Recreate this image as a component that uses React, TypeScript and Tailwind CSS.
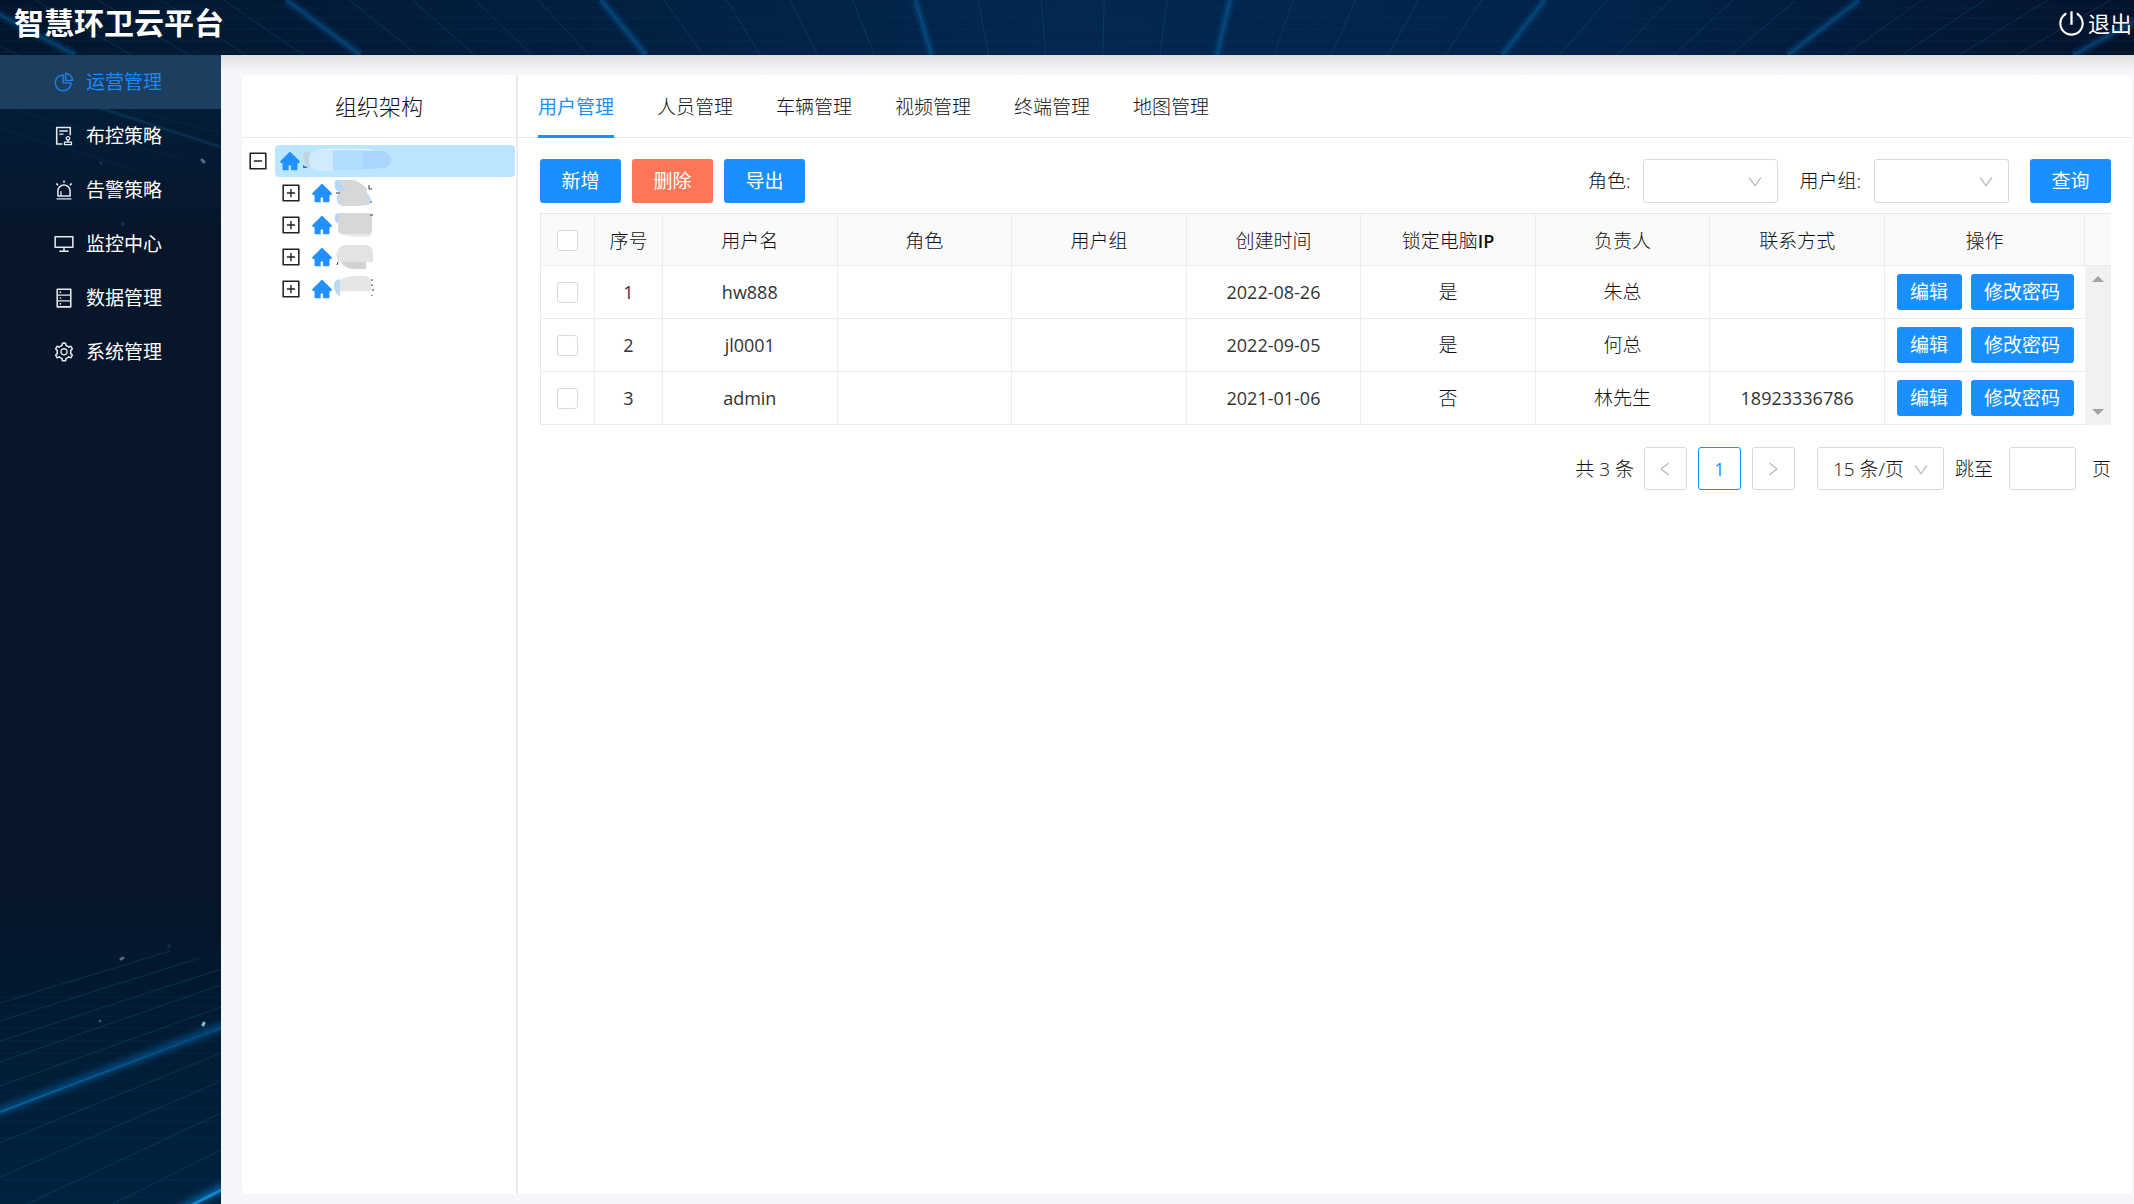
import { useState } from "react";
import type { ReactNode } from "react";
import type { IconType } from "react-icons";
import {
  AiFillHome,
  AiOutlineAlert,
  AiOutlineAudit,
  AiOutlineDatabase,
  AiOutlineDesktop,
  AiOutlineDown,
  AiOutlineLeft,
  AiOutlineMinusSquare,
  AiOutlinePieChart,
  AiOutlinePlusSquare,
  AiOutlinePoweroff,
  AiOutlineRight,
  AiOutlineSetting,
} from "react-icons/ai";

interface MenuItem {
  label: string;
  icon: IconType;
}

interface UserRow {
  id: number;
  name: string;
  createdAt: string;
  lockIp: boolean;
  owner: string;
  phone: string;
}

const MENU: MenuItem[] = [
  { label: "运营管理", icon: AiOutlinePieChart },
  { label: "布控策略", icon: AiOutlineAudit },
  { label: "告警策略", icon: AiOutlineAlert },
  { label: "监控中心", icon: AiOutlineDesktop },
  { label: "数据管理", icon: AiOutlineDatabase },
  { label: "系统管理", icon: AiOutlineSetting },
];

const TABS = ["用户管理", "人员管理", "车辆管理", "视频管理", "终端管理", "地图管理"];

const USERS: UserRow[] = [
  { id: 1, name: "hw888", createdAt: "2022-08-26", lockIp: true, owner: "朱总", phone: "" },
  { id: 2, name: "jl0001", createdAt: "2022-09-05", lockIp: true, owner: "何总", phone: "" },
  { id: 3, name: "admin", createdAt: "2021-01-06", lockIp: false, owner: "林先生", phone: "18923336786" },
];

const HEADER_LINES = Array.from({ length: 46 }, (_, i) => i - 5);

// [x1, y1, x2, y2] of the faint floor grid at the foot of the sidebar
const FLOOR_LINES = [
  [0, 103, 170, 51],
  [0, 121, 200, 58],
  [0, 141, 221, 69],
  [0, 162, 221, 85],
  [0, 186, 221, 107],
  [0, 243, 221, 153],
  [0, 277, 221, 181],
  [27, 304, 221, 213],
  [113, 304, 221, 250],
];

function HeaderGrid() {
  return (
    <svg
      className="absolute inset-0 h-full w-full"
      viewBox="0 0 2134 55"
      preserveAspectRatio="none"
      aria-hidden="true"
    >
      <defs>
        <linearGradient id="headerBg" x1="0" x2="1" y1="0" y2="0">
          <stop offset="0" stopColor="#03152c" />
          <stop offset="0.25" stopColor="#021e3e" />
          <stop offset="0.5" stopColor="#03274f" />
          <stop offset="0.75" stopColor="#02234a" />
          <stop offset="1" stopColor="#04122b" />
        </linearGradient>
      </defs>
      <rect width="2134" height="55" fill="url(#headerBg)" />
      {[8, 18, 29, 41, 52].map((y) => (
        <path key={y} d={`M0 ${y}H2134`} stroke="#0d4a6b" strokeOpacity="0.25" />
      ))}
      {HEADER_LINES.map((i) => {
        const d = `M${-28 + 62.9 * i} 0L${75 + 57.1 * i} 55`;
        return i % 5 === 0 ? (
          <g key={i} stroke="#0a6fb4" fill="none">
            <path d={d} strokeWidth="11" strokeOpacity="0.12" />
            <path d={d} strokeWidth="6" strokeOpacity="0.2" />
            <path d={d} strokeWidth="2" strokeOpacity="0.25" />
          </g>
        ) : (
          <path key={i} d={d} stroke="#14607f" strokeOpacity="0.35" />
        );
      })}
    </svg>
  );
}

function SidebarTopGlow() {
  return (
    <svg
      className="absolute top-0 left-0 w-full"
      viewBox="0 0 221 180"
      aria-hidden="true"
    >
      <defs>
        <linearGradient id="topFade" x1="0" x2="0" y1="0" y2="1">
          <stop offset="0" stopColor="#02203d" />
          <stop offset="1" stopColor="#02203d" stopOpacity="0" />
        </linearGradient>
      </defs>
      <rect width="221" height="180" fill="url(#topFade)" />
      <path d="M60 40L221 92" stroke="#0c5a8c" strokeWidth="3" strokeOpacity="0.3" />
      <path d="M0 50L180 104M0 74L140 116M110 50L221 78" stroke="#0c4a6c" strokeOpacity="0.25" />
      <path d="M202 105l2 2" stroke="#54708a" strokeWidth="3" strokeLinecap="round" />
      <circle cx="101" cy="108" r="2" fill="#17304a" />
      <circle cx="123" cy="169" r="2" fill="#17304a" />
    </svg>
  );
}

function SidebarFloor() {
  return (
    <svg
      className="absolute bottom-0 left-0 w-full"
      viewBox="0 0 221 304"
      aria-hidden="true"
    >
      <defs>
        <linearGradient id="floorBg" x1="0" x2="0" y1="0" y2="1">
          <stop offset="0" stopColor="#07162b" />
          <stop offset="0.3" stopColor="#021930" />
          <stop offset="1" stopColor="#00223f" />
        </linearGradient>
        <linearGradient id="beam" x1="0" x2="1" y1="0" y2="0">
          <stop offset="0" stopColor="#0b82c8" />
          <stop offset="1" stopColor="#08508a" />
        </linearGradient>
        <filter id="soft" x="-10%" y="-20%" width="120%" height="140%">
          <feGaussianBlur stdDeviation="3" />
        </filter>
      </defs>
      <rect width="221" height="304" fill="url(#floorBg)" />
      {[97, 106, 116, 128, 141, 153, 164, 180, 191, 208, 222, 238, 260, 280, 297].map((y) => (
        <path key={y} d={`M0 ${y}H221`} stroke="#0c4a6a" strokeOpacity="0.25" />
      ))}
      {FLOOR_LINES.map(([x1, y1, x2, y2]) => (
        <path key={y1 + x1} d={`M${x1} ${y1}L${x2} ${y2}`} stroke="#0f5570" strokeOpacity="0.45" />
      ))}
      <path d="M-5 213L226 125" stroke="#0767b0" strokeWidth="8" strokeOpacity="0.55" filter="url(#soft)" />
      <path d="M0 212L221 128" stroke="url(#beam)" strokeWidth="2" strokeOpacity="0.55" />
      <path d="M180 310L226 286" stroke="#0a8be0" strokeWidth="9" strokeOpacity="0.5" filter="url(#soft)" />
      <path d="M190 306L221 290" stroke="#1593e0" strokeWidth="3" strokeOpacity="0.8" />
      <path d="M121 59l2-1" stroke="#56687c" strokeWidth="3" strokeLinecap="round" />
      <path d="M203 125l1-2" stroke="#6fc0ee" strokeWidth="3" strokeLinecap="round" />
      <circle cx="100" cy="121" r="1.5" fill="#2f5872" />
      <circle cx="169" cy="46" r="2" fill="#142c42" />
    </svg>
  );
}

// Masked organisation names
const MASKS: ReactNode[] = [
  <>
    <path d="M2 5q-2-4 3-4h12v12H6Q1 11 2 5z" fill="#b5d8f5" />
    <path d="M4 22q-2-7 4-8h25q8 4 3 12H10q-5 0-6-4z" fill="#c3ddf4" />
    <path d="M6 1h15q8 3 13 9v15q-4 2-12 2H10q-6-1-3-8l-1-6q8-1 4-5z" fill="#d7d7d7" />
    <path d="M36 6v4h3M3 14h4M38 22v2" stroke="#333" fill="none" />
  </>,
  <>
    <path d="M6 2q-5 0-4 6 0 4 4 4z" fill="#b5d5f0" />
    <path d="M6 22h32v3q-14 2-27-1z" fill="#e8e8e8" />
    <path d="M6 2h30q4 1 3 5v13q0 3-4 3H8q-4-2-3-7z" fill="#d7d7d7" />
    <path d="M37 4h3" stroke="#333" />
  </>,
  <>
    <path d="M8 19h25v7H20q-8 0-12-7z" fill="#d3d1d1" />
    <path d="M12 2h22q6 2 6 8v9H6q-4-5-2-10 2-6 8-7z" fill="#e4e3e3" />
    <path d="M5 19l-1 3" stroke="#333" />
  </>,
  <>
    <path d="M7 4Q0 5 1 12q1 7 6 9z" fill="#bcd9f2" />
    <path d="M7 5q7-4 16-4h9q6 1 6 6v9H7z" fill="#e6e5e6" />
    <path d="M39 4v2M39 9v2M40 14v2M39 20v1" stroke="#333" />
  </>,
];

function OrgTree() {
  return (
    <ul className="py-[7px] pr-px pl-[5px] text-[#222]">
      <li>
        <div className="flex h-8 items-center">
          <button type="button" aria-label="收起" className="mr-1.5 shrink-0">
            <AiOutlineMinusSquare className="size-[22px]" />
          </button>
          <div className="flex h-8 flex-1 items-center rounded-sm bg-[#bae7ff] pl-1">
            <AiFillHome className="size-[22px] text-[#2490ff]" />
            <svg className="h-7 w-24" viewBox="0 0 96 28" aria-hidden="true">
              <path d="M3 5h6v15H5Q1 12 3 5z" fill="#c2d5e2" />
              <path d="M2 18l5 3H2z" fill="#2b71d8" />
              <path d="M15 4q-9 3-7 11 2 8 8 9h16V4z" fill="#d2ebfc" />
              <path d="M32 4h48q10 1 10 9 0 7-8 8l-30 2H32z" fill="#b0dcff" />
              <path d="M62 4h18q10 1 10 9 0 7-8 8l-20 1z" fill="#a9d7ff" />
              <path d="M17 3q30-2 55 0" stroke="#e8f7ff" fill="none" />
            </svg>
          </div>
        </div>
        <ul className="pl-[33px]">
          {MASKS.map((mask, index) => (
            <li key={index} className="flex h-8 items-center">
              <button type="button" aria-label="展开" className="mr-[9px] shrink-0">
                <AiOutlinePlusSquare className="size-[22px]" />
              </button>
              <AiFillHome className="size-[22px] text-[#2490ff]" />
              <svg className="h-7 w-10 overflow-visible" viewBox="0 0 40 28" aria-hidden="true">
                {mask}
              </svg>
            </li>
          ))}
        </ul>
      </li>
    </ul>
  );
}

function FilterSelect({ id, label }: { id: string; label: string }) {
  return (
    <div className="flex items-center gap-[13px]">
      <label htmlFor={id}>{label}</label>
      <div className="relative">
        <select
          id={id}
          className="block h-11 w-[135px] appearance-none rounded-[3px] border border-[#d9d9d9] bg-white px-4"
        >
          <option value="" />
        </select>
        <AiOutlineDown className="pointer-events-none absolute top-3.5 right-3.5 size-[18px] text-[#bfbfbf]" />
      </div>
    </div>
  );
}

function Checkbox({ label }: { label: string }) {
  return (
    <input
      type="checkbox"
      aria-label={label}
      className="block mx-auto size-[21px] appearance-none rounded-[3px] border border-[#d9d9d9] bg-white checked:bg-[#1890ff]"
    />
  );
}

function UserTable() {
  const th = "border-r border-b border-[#ececec] p-0 pt-0.5 font-light";
  const td = "border-r border-b border-[#ececec] p-0";
  const latin = `${td} text-lg font-normal text-[#333]`;

  return (
    <table className="w-full table-fixed border-separate border-spacing-0 border-t border-l border-[#e8e8e8] text-center">
      <colgroup>
        <col className="w-[54px]" />
        <col className="w-[68px]" />
        <col span={7} />
        <col className="w-[200px]" />
        <col className="w-[26px]" />
      </colgroup>
      <thead className="bg-[#fafafa]">
        <tr className="h-[52px]">
          <th className={th}>
            <Checkbox label="全选" />
          </th>
          <th className={th}>序号</th>
          <th className={th}>用户名</th>
          <th className={th}>角色</th>
          <th className={th}>用户组</th>
          <th className={th}>创建时间</th>
          <th className={th}>
            锁定电脑<span className="text-lg font-semibold">IP</span>
          </th>
          <th className={th}>负责人</th>
          <th className={th}>联系方式</th>
          <th className={th}>操作</th>
          <th className="border-b border-[#ececec]" />
        </tr>
      </thead>
      <tbody>
        {USERS.map((user, index) => (
          <tr key={user.id} className="h-[53px]">
            <td className={td}>
              <Checkbox label={`选择 ${user.name}`} />
            </td>
            <td className={latin}>{user.id}</td>
            <td className={latin}>{user.name}</td>
            <td className={td} />
            <td className={td} />
            <td className={latin}>{user.createdAt}</td>
            <td className={td}>{user.lockIp ? "是" : "否"}</td>
            <td className={td}>{user.owner}</td>
            <td className={latin}>{user.phone}</td>
            <td className="border-b border-[#ececec] p-0">
              <div className="flex justify-center gap-[9px] font-normal text-white">
                <button type="button" className="h-9 w-[65px] rounded-[3px] bg-[#1890ff]">
                  编辑
                </button>
                <button type="button" className="h-9 w-[103px] rounded-[3px] bg-[#1890ff]">
                  修改密码
                </button>
              </div>
            </td>
            {index === 0 && (
              <td rowSpan={USERS.length} className="h-px bg-[#f1f1f1] p-0">
                <div className="flex h-full flex-col items-center justify-between py-2.5">
                  <svg className="h-1.5 w-3" viewBox="0 0 12 6" aria-hidden="true">
                    <path d="M0 6L6 0L12 6z" fill="#a3a3a3" />
                  </svg>
                  <svg className="h-1.5 w-3" viewBox="0 0 12 6" aria-hidden="true">
                    <path d="M0 0L6 6L12 0z" fill="#a3a3a3" />
                  </svg>
                </div>
              </td>
            )}
          </tr>
        ))}
      </tbody>
    </table>
  );
}

function Pagination() {
  const box = "flex size-[43px] items-center justify-center rounded-[3px] border bg-white";

  return (
    <div className="mt-[22px] flex items-center justify-end">
      <span className="mr-2.5">共 3 条</span>
      <div className="flex gap-[11px]">
        <button type="button" aria-label="上一页" className={`${box} border-[#d9d9d9] text-[#bfbfbf]`}>
          <AiOutlineLeft className="size-[18px]" />
        </button>
        <button type="button" className={`${box} border-[#1890ff] text-lg font-normal text-[#1890ff]`}>
          1
        </button>
        <button type="button" aria-label="下一页" className={`${box} border-[#d9d9d9] text-[#bfbfbf]`}>
          <AiOutlineRight className="size-[18px]" />
        </button>
      </div>
      <div className="relative ml-[22px]">
        <select
          aria-label="每页条数"
          className="block h-[43px] w-[127px] appearance-none rounded-[3px] border border-[#d9d9d9] bg-white pl-[15px]"
        >
          <option>15 条/页</option>
        </select>
        <AiOutlineDown className="pointer-events-none absolute top-3.5 right-3.5 size-[18px] text-[#bfbfbf]" />
      </div>
      <label htmlFor="jump" className="mr-4 ml-[11px]">
        跳至
      </label>
      <input id="jump" type="text" className="h-[43px] w-[67px] rounded-[3px] border border-[#d9d9d9] px-3" />
      <span className="ml-4">页</span>
    </div>
  );
}

export default function App() {
  const [activeMenu, setActiveMenu] = useState("运营管理");
  const [activeTab, setActiveTab] = useState("用户管理");

  return (
    <div className="flex min-h-screen flex-col bg-[#f4f6fa] font-['Open_Sans','Noto_Sans_CJK_SC',sans-serif] text-[19px] leading-7 font-light text-[#111]">
      <header className="relative z-10 flex h-[55px] items-start justify-between pr-0.5 pl-3.5 text-white">
        <HeaderGrid />
        <h1 className="relative text-[30px] leading-[45px] font-bold">智慧环卫云平台</h1>
        <button type="button" className="relative flex items-center gap-0.5 text-[22px] leading-[46px] font-normal">
          <AiOutlinePoweroff className="size-[29px]" />
          退出
        </button>
      </header>

      <div className="flex flex-1">
        <nav className="relative w-[221px] shrink-0 bg-[#07162b] font-normal">
          <SidebarTopGlow />
          <SidebarFloor />
          <ul className="relative">
            {MENU.map(({ label, icon: Icon }) => (
              <li key={label}>
                <a
                  href="#"
                  onClick={() => setActiveMenu(label)}
                  className={`flex h-[54px] items-center gap-[11px] pl-[53px] ${
                    label === activeMenu ? "bg-[#1d3f5f] text-[#1f86f5]" : "text-white"
                  }`}
                >
                  <Icon className="size-[22px] opacity-90" />
                  {label}
                </a>
              </li>
            ))}
          </ul>
        </nav>

        <main className="flex min-w-0 flex-1 bg-linear-to-b from-[#dedede] from-0% to-[#f4f6fa] to-[16px] pt-5 pr-0.5 pb-2.5 pl-[21px]">
          <aside className="w-[276px] shrink-0 rounded-l-sm border-r-2 border-[#ececef] bg-white">
            <h2 className="flex h-[63px] items-center justify-center border-b border-[#ececec] text-[22px]">
              组织架构
            </h2>
            <OrgTree />
          </aside>

          <section className="min-w-0 flex-1 rounded-r-sm bg-white">
            <div role="tablist" className="flex h-[63px] gap-[43px] border-b border-[#e8e8e8] px-5">
              {TABS.map((tab) => (
                <button
                  key={tab}
                  type="button"
                  role="tab"
                  aria-selected={tab === activeTab}
                  onClick={() => setActiveTab(tab)}
                  className={`h-[63px] border-b-3 pt-1 ${
                    tab === activeTab
                      ? "border-[#1890ff] font-normal text-[#1890ff]"
                      : "border-transparent"
                  }`}
                >
                  {tab}
                </button>
              ))}
            </div>

            <div className="py-[21px] pr-[21px] pl-[22px]">
              <div className="mb-2.5 flex items-center justify-between">
                <div className="flex gap-[11px] font-normal text-white">
                  <button type="button" className="h-11 w-[81px] rounded-[3px] bg-[#1890ff]">
                    新增
                  </button>
                  <button type="button" className="h-11 w-[81px] rounded-[3px] bg-[#ff7558]">
                    删除
                  </button>
                  <button type="button" className="h-11 w-[81px] rounded-[3px] bg-[#1890ff]">
                    导出
                  </button>
                </div>
                <div className="flex items-center gap-[21px]">
                  <FilterSelect id="role" label="角色:" />
                  <FilterSelect id="group" label="用户组:" />
                  <button
                    type="button"
                    className="h-11 w-[81px] rounded-[3px] bg-[#1890ff] font-normal text-white"
                  >
                    查询
                  </button>
                </div>
              </div>
              <UserTable />
              <Pagination />
            </div>
          </section>
        </main>
      </div>
    </div>
  );
}
